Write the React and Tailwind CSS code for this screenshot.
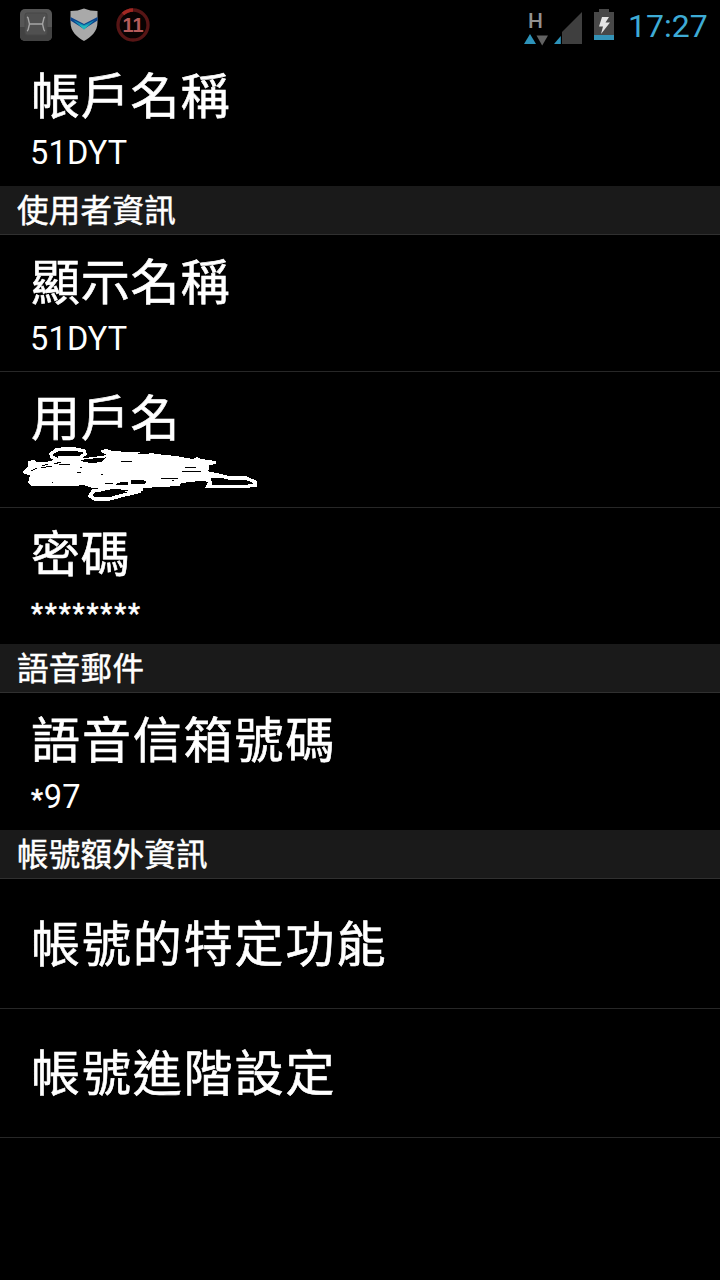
import clsx from 'clsx'

function AppTileIcon() {
  return (
    <svg width="34" height="34" viewBox="0 0 34 34">
      <rect x="1" y="1" width="32" height="32" rx="5" fill="#565656" />
      <path d="M1 19H33V28a5 5 0 0 1-5 5H6a5 5 0 0 1-5-5Z" fill="#424242" />
      <rect x="6" y="5" width="22" height="22" rx="2" fill="#505050" stroke="#474747" />
      <path d="M8 9Q9.500 9.500 9.500 12L10.500 16 9.500 20Q9.500 22.500 8 23M26 9Q24.500 9.500 24.500 12L23.500 16 24.500 20Q24.500 22.500 26 23M10.500 16H23.500" fill="none" stroke="#a5a5a5" strokeWidth="1.400" />
    </svg>
  )
}

function ShieldIcon() {
  return (
    <svg width="28" height="34" viewBox="0 0 28 34">
      <path d="M0.5 3Q8 3 14 .5Q20 3 27.500 3V14C27.500 24 21 29 14 33C7 29 .5 24 .5 14Z" fill="#a9a9a9" />
      <path d="M.5 9 14 16 27.500 9V12.500L14 21 .5 12.500Z" fill="#0b438c" />
      <path d="M3 12 14 17 25 12 14 21.500Z" fill="#1592b5" />
      <path d="M9 16.500 14 18 19 16.500 14 21.500Z" fill="#25b8bd" />
    </svg>
  )
}

function CounterIcon() {
  return (
    <svg width="36" height="36" viewBox="0 0 36 36">
      <circle cx="18" cy="18" r="15" fill="#080202" stroke="#571515" strokeWidth="3.300" />
      <path d="M8 7A15 15 0 0 1 18 3" fill="none" stroke="#a02722" strokeWidth="3.500" />
      <text x="18" y="25" textAnchor="middle" fontFamily="Liberation Sans" fontWeight="700" fontSize="20" fill="#b65b5b">11</text>
    </svg>
  )
}

function NetworkIcon() {
  return (
    <svg width="60" height="38" viewBox="0 0 60 38">
      <text x="4" y="17.500" fontFamily="Roboto" fontWeight="500" fontSize="21" fill="#929292">H</text>
      <path d="M0 34 6 24 12 34Z" fill="#2d93ba" />
      <path d="M12.500 25.500H24L18.200 35.500Z" fill="#626262" />
      <path d="M58 2V34H38V22Z" fill="#3f3f3f" />
      <path d="M36.800 26V34H30Z" fill="#2d93ba" />
    </svg>
  )
}

function BatteryIcon() {
  return (
    <svg width="20" height="32" viewBox="0 0 20 32">
      <path d="M5 0H15V3H20V26H0V3H5Z" fill="#484848" />
      <rect y="26" width="20" height="5" fill="#3493b7" />
      <path d="M8 8H15L11.500 13.500H16L7 25 9 17.500H5Z" fill="#e5e5e5" />
    </svg>
  )
}

// Hand-drawn strokes hiding the user name
function Scribble() {
  return (
    <svg className="absolute left-[20px] top-[74px]" width="240" height="56" viewBox="20 446 240 56" shapeRendering="crispEdges">
      <path
        d="M28 461 34 460 36 462 46 462 54 460 62 458 78 459 93 457 107 455 101 452 101 450 106 449 112 451 130 452 150 453 165 455 176 456 193 459 197 457 201 459 216 461 216 464 209 465 209 470 204 472 213 473 222 475 222 478 211 478 211 482 200 481 181 483 180 486 160 487 143 488 143 491 128 493 116 489 93 488 83 485 74 486 31 486 28 483 30 475 24 474 23 471 28 466Z"
        fill="#fff"
      />
      <path d="M60 461 52 457 51 454 56 450 63 449 75 449 84 451 85 454 79 458 58 458" fill="none" stroke="#fff" strokeWidth="3.500" />
      <path d="M112 488 93 491 90 496 95 499 109 499 124 495 141 491" fill="none" stroke="#fff" strokeWidth="3.500" />
      <path d="M203 472 222 476 229 478 246 478 255 482 255 485 248 486 208 486 211 481" fill="none" stroke="#fff" strokeWidth="3.500" />
      <path d="M99 492 112 489 129 490 121 493 111 496 96 497 94 495Z" fill="#000" />
      <path d="M213 479 226 480H246L251 483 247 485H212Z" fill="#000" />
      <path d="M80 460 106 457 101 462 92 463 84 462Z" fill="#000" />
      <path d="M79 459 105 457" stroke="#fff" />
      <path d="M31 471 37 468M41 468 52 466M42 466 48 464M54 464 61 462M59 464H70M77 472H81M80 467H82M101 474H103M121 461H132M138 453H149M185 467H196M182 471H201M161 479 178 478M172 480H174M105 483H113M52 482H53" fill="none" stroke="#000" strokeWidth="1" />
      <path d="M116 484 121 482H128V485H116ZM131 480H143L147 482 144 484H131Z" fill="#000" />
    </svg>
  )
}

function StatusBar() {
  return (
    <header className="flex h-[50px] items-center">
      <div className="ml-[19px] flex items-center gap-[17px]">
        <AppTileIcon />
        <ShieldIcon />
        <CounterIcon />
      </div>
      <div className="ml-auto flex items-center pr-[10px]">
        <div className="mt-[7px]"><NetworkIcon /></div>
        <div className="ml-[10px]"><BatteryIcon /></div>
        <time className="ml-[14px] mt-[2px] w-[82px] whitespace-nowrap font-['Roboto'] text-[32px] leading-[48px] text-[#3eabd5]">17:27</time>
      </div>
    </header>
  )
}

function Category({ children }) {
  return (
    <h2 className="h-[49px] border-b border-[#303030] bg-[#1a1a1a] pl-[17px] text-[31.5px] leading-[45px] tracking-[0.3px] [-webkit-text-stroke:0.5px_white]">
      {children}
    </h2>
  )
}

function Preference({ title, wide, last, className, children }) {
  return (
    <section className={clsx('relative pl-[31px]', !last && 'border-b border-[#272727]', className)}>
      <div className={clsx('text-[49px] leading-[61px] [-webkit-text-stroke:0.6px_white]', wide ? 'tracking-[1.9px]' : 'tracking-[0.8px]')}>{title}</div>
      {children}
    </section>
  )
}

function Summary({ children }) {
  return <div className="-ml-px mt-[10px] h-[40px] font-['Roboto'] text-[32.5px] leading-[40px] tracking-[0.2px]">{children}</div>
}

function Stars({ children }) {
  return <span className="relative left-px top-[1px] text-[28px] tracking-[1.8px] [-webkit-text-stroke:0.5px_white]">{children}</span>
}

export default function App() {
  return (
    <main className="h-[1280px] w-[720px] overflow-hidden bg-black font-['Noto_Sans_CJK_TC',sans-serif] text-white">
      <StatusBar />
      <Preference title="帳戶名稱" last className="h-[136px] pt-[12px]">
        <Summary>51DYT</Summary>
      </Preference>

      <Category>使用者資訊</Category>
      <Preference title="顯示名稱" className="h-[137px] pt-[13px]">
        <Summary>51DYT</Summary>
      </Preference>
      <Preference title="用戶名" className="h-[136px] pt-[12px]">
        <Scribble />
      </Preference>
      <Preference title="密碼" last className="h-[136px] pt-[12px]">
        <Summary><Stars>********</Stars></Summary>
      </Preference>

      <Category>語音郵件</Category>
      <Preference title="語音信箱號碼" wide last className="h-[137px] pt-[13px]">
        <Summary><Stars>*</Stars>97</Summary>
      </Preference>

      <Category>帳號額外資訊</Category>
      <Preference title="帳號的特定功能" wide className="h-[130px] pt-[31px]" />
      <Preference title="帳號進階設定" wide className="h-[129px] pt-[30px]" />
    </main>
  )
}
